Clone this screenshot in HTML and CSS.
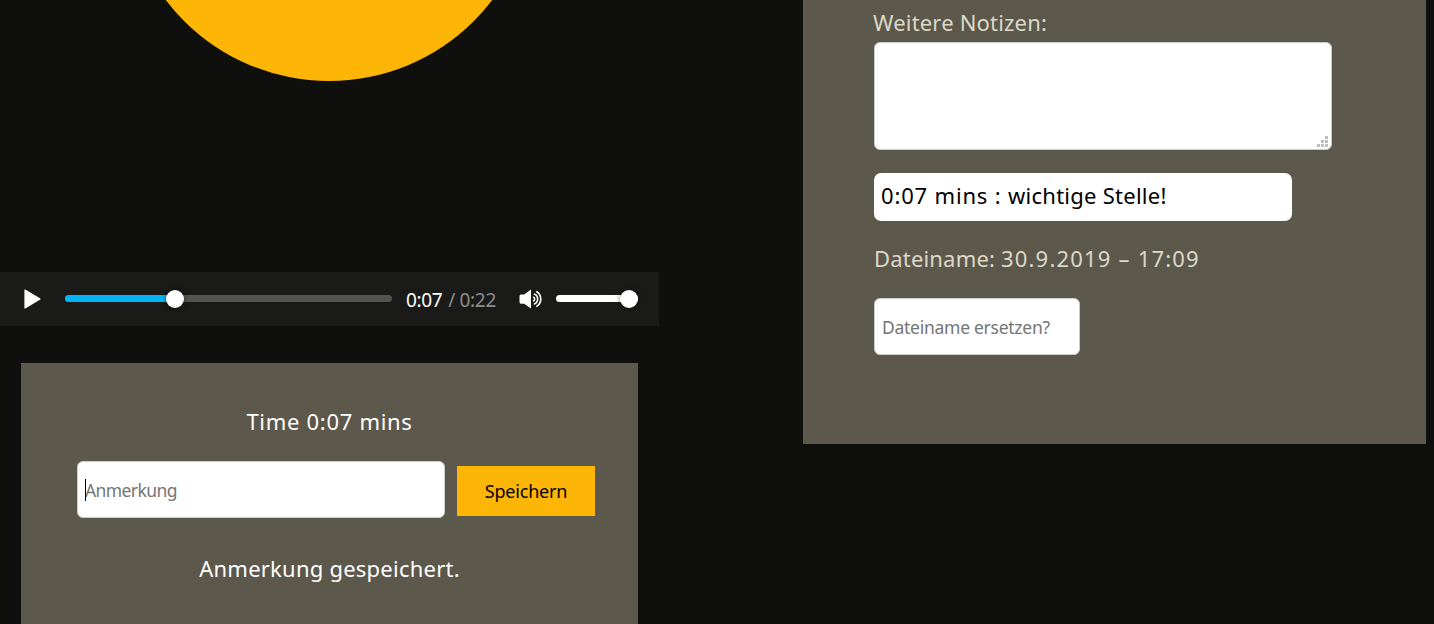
FILE: index.html
```html
<!DOCTYPE html>
<html lang="de">
<head>
<meta charset="utf-8">
<title>Notizen</title>
<link rel="stylesheet" href="styles.css">
</head>
<body>
<main class="page">
  <section class="media">
    <div class="stage"><div class="disc"></div></div>
    <div class="player">
      <svg class="play" viewBox="0 0 18 20"><path d="M1 1 16 10 1 19Z" fill="#fff" stroke="#fff" stroke-width="1.2" stroke-linejoin="round"/></svg>
      <div class="track progress"><div class="fill"></div><span class="knob"></span></div>
      <div class="clock"><span class="now">0:07</span><span class="total">/ 0:22</span></div>
      <svg class="speaker" viewBox="0 0 24 20"><path d="M.5 7.2Q.5 5.600 2 5.600H5.300L12 .5V19.500L5.300 14.800H2Q.5 14.800 .5 13Z" fill="#fff"/><g fill="none" stroke="#fff" stroke-width="1.6"><path d="M14.200 7.900A2.400 2.400 0 0 1 14.200 12.300"/><path d="M14.800 5A5.300 5.300 0 0 1 14.800 15.200"/><path d="M17.300 2.500A8.600 8.600 0 0 1 17.300 17.600"/></g></svg>
      <div class="track volume"><span class="knob"></span></div>
    </div>
    <div class="card annotate">
      <p class="line time">Time 0:07 mins</p>
      <div class="entry">
        <div class="field-wrap"><input class="field wide" placeholder="Anmerkung"><span class="caret"></span></div>
        <button class="save">Speichern</button>
      </div>
      <p class="line saved">Anmerkung gespeichert.</p>
    </div>
  </section>
  <section class="card notes">
    <label class="line muted more" for="notes">Weitere Notizen:</label>
    <div class="area-wrap">
      <textarea id="notes" class="field area"></textarea>
      <svg class="grip" viewBox="0 0 11 11" shape-rendering="crispEdges"><path d="M8 0h3v3h-3zM4 4h3v3h-3zM8 4h3v3h-3zM0 8h3v3h-3zM4 8h3v3h-3zM8 8h3v3h-3z" fill="#bfbfbf"/></svg>
    </div>
    <div class="note"><span class="stamp">0:07 mins : </span>wichtige Stelle!</div>
    <p class="line muted filename">Dateiname: <span class="date">30.9.2019 – 17:09</span></p>
    <input class="field rename" placeholder="Dateiname ersetzen?">
  </section>
</main>
</body>
</html>
```
FILE: styles.css
```css
* { box-sizing: border-box; }
body {
  margin: 0;
  height: 624px;
  overflow: hidden;
  background: #0f0f0d;
  color: #fff;
  font: 22px/30px "Noto Sans", "Open Sans", sans-serif;
}
p { margin: 0; }
.page { display: grid; grid-template-columns: 659px 623px; column-gap: 144px; align-items: start; }
.stage { height: 272px; display: flex; justify-content: center; overflow: hidden; }
.disc { flex: none; width: 410px; height: 410px; margin: -329px 1px 0 0; border-radius: 50%; background: #fdb605; }
.player { display: flex; align-items: center; height: 54px; padding-left: 24px; background: #1a1a18; }
.play { width: 18px; height: 20px; margin-right: 23px; }
.track { position: relative; height: 7px; border-radius: 4px; margin-bottom: 1px; }
.progress { width: 327px; background: #535353; }
.fill { width: 110px; height: 7px; border-radius: 4px 0 0 4px; background: #00b5f5; }
.knob { position: absolute; top: -5px; width: 18px; height: 18px; border-radius: 50%; background: #fff; box-shadow: 0 0 5px rgba(0, 0, 0, .55); }
.progress .knob { left: 101px; }
.clock { display: flex; width: 92px; margin-left: 14px; padding-top: 2px; gap: 6px; font-size: 19px; letter-spacing: -.35px; white-space: nowrap; }
.total { color: #8c8c8b; }
.speaker { width: 24px; height: 20px; margin: 0 13px 0 21px; }
.volume { width: 82px; background: #fff; }
.volume .knob { left: 64px; }
.card { background: #5c584b; }
.annotate { height: 270px; margin: 37px 21px 0; padding-top: 43px; text-align: center; }
.line { display: block; white-space: nowrap; }
.time { letter-spacing: .7px; }
.saved { margin-top: 36px; letter-spacing: .23px; }
.entry { display: flex; align-items: center; gap: 12px; margin-top: 25px; padding-left: 56px; }
.saved { margin-top: 35px; }
.field-wrap { position: relative; height: 57px; }
.field { display: block; padding: 0 7px; border: 1px solid #ccc; border-radius: 6px; outline: 0; background: #fff; font: 17.5px "Noto Sans", "Open Sans", sans-serif; letter-spacing: -.27px; }
.field::placeholder { color: #757575; opacity: 1; }
.wide { width: 368px; height: 57px; letter-spacing: -.6px; }
.caret { position: absolute; left: 8px; top: 18px; width: 1px; height: 22px; background: #000; }
.save { width: 138px; height: 50px; margin-top: 3px; padding: 0; border: 0; background: #fdb605; color: #000; font: 18px "Noto Sans", "Open Sans", sans-serif; letter-spacing: -.2px; }
.notes { height: 444px; padding: 7px 0 0 71px; }
.muted { color: #ddd8c8; letter-spacing: .18px; }
.more { margin-left: -1px; }
.area-wrap { position: relative; width: 458px; height: 108px; margin-top: 5px; }
.area { width: 458px; height: 108px; resize: none; }
.grip { position: absolute; right: 4px; bottom: 3px; width: 11px; height: 11px; }
.note { width: 418px; height: 48px; margin-top: 23px; padding-left: 7px; border-radius: 7px; background: #fff; color: #000; line-height: 44px; letter-spacing: .25px; white-space: pre; }
.stamp { letter-spacing: .83px; }
.filename { margin-top: 22px; }
.date { letter-spacing: 1.2px; }
.rename { width: 206px; height: 57px; margin-top: 25px; }
```
